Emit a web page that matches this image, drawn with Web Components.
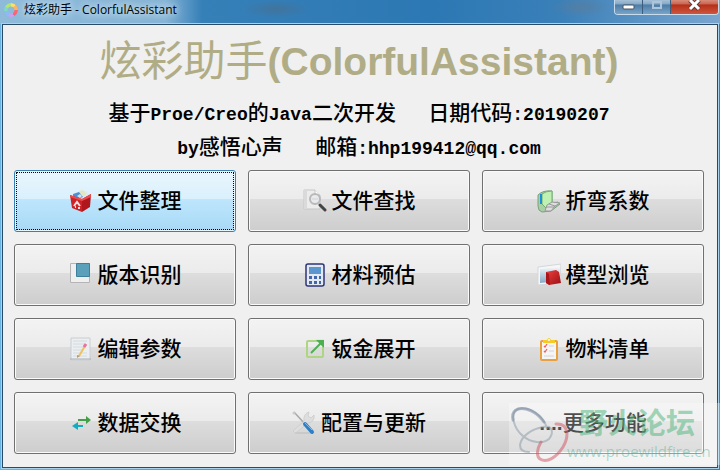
<!DOCTYPE html>
<html lang="zh-CN">
<head>
<meta charset="utf-8">
<title>炫彩助手 - ColorfulAssistant</title>
<style>
    body {
        margin: 0;
        background: #4a96cc;
        font-family: "Liberation Sans", "Noto Sans CJK SC", sans-serif;
    }
    svg {
        display: block;
    }
</style>
</head>
<body>
<app-window>
    <title-bar slot="bar">炫彩助手 - ColorfulAssistant</title-bar>
    <app-header>
        <span slot="name">炫彩助手</span>
        <span slot="latin">(ColorfulAssistant)</span>
    </app-header>
    <tool-grid>
        <tool-button active label="文件整理">
            <svg width="24" height="24" viewBox="0 0 24 24">
                <path d="M4 7L8 3L17 2L21 6L12 10Z" fill="#dfe9ee"/>
                <path d="M10 2L14 1L17 5L14 8Z" fill="#e3e6bf"/>
                <path d="M4 5L10 3L14 8L9 10L4 8Z" fill="#4d8fd0"/>
                <path d="M8 7l3-2 2 2-2 2z" fill="#cfe4f6"/>
                <path d="M1 6L13 10L13 23L3 19Z" fill="#cb2127"/>
                <path d="M22 5L13 10L13 23L21 18Z" fill="#b0171d"/>
                <path d="M1 6L13 10L22 5L22 8L13 12L1 8Z" fill="#ee4b4b"/>
                <path d="M5 17L8 13L11 17M6 18H7M9 19H11" stroke="#f9dede" stroke-width="2" fill="none"/>
            </svg>
        </tool-button>
        <tool-button label="文件查找">
            <svg width="24" height="24" viewBox="0 0 24 24">
                <path d="M1 1H12L17 6V20H1Z" fill="#ececec" stroke="#c6c6c6"/>
                <path d="M1 1V20H4V1Z" fill="#dadada"/>
                <path d="M12 1V6H17" fill="#fff" stroke="#c6c6c6"/>
                <path d="M17 16L22 21" stroke="#444" stroke-width="3" stroke-linecap="round"/>
                <circle cx="12" cy="10" r="5" fill="#e9eaec" stroke="#b8b8ba" stroke-width="2"/>
                <path d="M9 10H15" stroke="#cfd1d4"/>
            </svg>
        </tool-button>
        <tool-button label="折弯系数">
            <svg width="24" height="24" viewBox="0 0 24 24">
                <path d="M1 6Q6 1 15 2V14L21 13L23 15L14 22L5 23Q1 22 1 17Z" fill="#a9cfa7" stroke="#78a178"/>
                <path d="M5 5Q9 2 15 2V14Q10 15 9 19L5 15Z" fill="#bff0b4" stroke="#70b070"/>
                <path d="M4 5V15" stroke="#1a91d6" stroke-width="2"/>
                <path d="M10 16L15 13L23 14L18 17L14 22H8Z" fill="#dedede" stroke="#999"/>
                <path d="M9 18H17M12 15L18 17" stroke="#999" fill="none"/>
            </svg>
        </tool-button>
        <tool-button label="版本识别">
            <svg width="24" height="24" viewBox="0 0 24 24">
                <path d="M1.500 .5H20.500V19.500H1.500Z" fill="#efefef" stroke="#b5b5b5"/>
                <path d="M7.500 .5H20.500V13.500H7.500Z" fill="#5ba0ba" stroke="#3c8199"/>
            </svg>
        </tool-button>
        <tool-button label="材料预估">
            <svg width="24" height="24" viewBox="0 0 24 24">
                <rect x="3" y="1" width="18" height="22" rx="2" fill="#e4e9f1" stroke="#2c3478" stroke-width="1.5"/>
                <rect x="6" y="4" width="12" height="7" fill="#5b97cf"/>
                <path d="M6 13h3v3H6zM11 13h3v3h-3zM16 13h2v3h-2zM6 18h3v3H6zM11 18h3v3h-3zM16 18h2v3h-2z" fill="#3f68ab"/>
            </svg>
        </tool-button>
        <tool-button label="模型浏览">
            <svg width="24" height="24" viewBox="0 0 24 24">
                <defs>
                    <linearGradient id="pane" x2="0" y2="1"><stop stop-color="#f4f7fa"/><stop offset=".5" stop-color="#b9d0e2"/><stop offset="1" stop-color="#87a9c4"/></linearGradient>
                    <linearGradient id="ruby" x2="1" y2="1"><stop stop-color="#ef4141"/><stop offset="1" stop-color="#9b0f12"/></linearGradient>
                </defs>
                <path d="M1 4L24 1L23 20L1 22Z" fill="#f6f6f6" stroke="#d3d7da"/>
                <path d="M3 6L23 4L22 18L3 20Z" fill="url(#pane)"/>
                <path d="M9 9L19 7L22 9L24 20L12 22L9 20Z" fill="url(#ruby)"/>
                <path d="M9 9L12 11L13 22L9 20Z" fill="#a8161a"/>
            </svg>
        </tool-button>
        <tool-button label="编辑参数">
            <svg width="24" height="24" viewBox="0 0 24 24">
                <path d="M2 1H21V23H2Z" fill="#eceff1" stroke="#c9ced2"/>
                <path d="M1 22H22" stroke="#a9afb4"/>
                <path d="M4 4h14M4 7h13M4 10h11M4 13h9M4 16h14M4 19h14" stroke="#d3dade"/>
                <path d="M16 9L10 19" stroke="#edc260" stroke-width="2"/>
                <path d="M15 10L17 7" stroke="#e7759a" stroke-width="3"/>
                <path d="M8 21L8 18L11 19Z" fill="#b59a6b"/>
            </svg>
        </tool-button>
        <tool-button label="钣金展开">
            <svg width="24" height="24" viewBox="0 0 24 24">
                <rect x="4" y="4" width="16" height="16" rx="1" fill="none" stroke="#aed581" stroke-width="2"/>
                <path d="M13 2H21V11Z" fill="#e5e5e5"/>
                <path d="M8 16L18 6" stroke="#4caf50" stroke-width="2"/>
                <path d="M13 3H21V11Z" fill="#4caf50"/>
            </svg>
        </tool-button>
        <tool-button label="物料清单">
            <svg width="24" height="24" viewBox="0 0 24 24">
                <rect x="4" y="4" width="16" height="19" rx="1" fill="#f5f5f6" stroke="#e8a040" stroke-width="2"/>
                <path d="M6 6V3H10Q12-1 14 3H18V6Z" fill="#f7cb26"/>
                <circle cx="12" cy="3" r="1" fill="#fff"/>
                <path d="M7 9l1 1 2-3M7 14l1 1 2-3" stroke="#ef6060" fill="none" stroke-width="1.3"/>
                <path d="M12 9h5M12 14h5M7 19h10" stroke="#d2d4d8"/>
            </svg>
        </tool-button>
        <tool-button label="数据交换">
            <svg width="24" height="24" viewBox="0 0 24 24">
                <path d="M9 8H17V5L22 9L17 13V10H9Z" fill="#43a047"/>
                <path d="M14 14H9V11L3 15L9 19V16H14Z" fill="#12acc1"/>
            </svg>
        </tool-button>
        <tool-button label="配置与更新">
            <svg width="24" height="24" viewBox="0 0 24 24">
                <path d="M3 22H21" stroke="#bbb"/>
                <path d="M2 1L13 13" stroke="#a8a8a8" stroke-width="1.5"/>
                <circle cx="2" cy="2" r="1.5" fill="#c9c9c9"/>
                <path d="M3 22L1 20L12 10Q11 3 17 1L16 5L19 7L22 4Q23 11 16 12L5 21Z" fill="#dedede" stroke="#cacaca" stroke-width=".8"/>
                <path d="M13 13L20 21" stroke="#2f7fc4" stroke-width="4" stroke-linecap="round"/>
                <path d="M13 12L20 19" stroke="#7db7e8"/>
            </svg>
        </tool-button>
        <tool-button tight label="更多功能"><b>....</b></tool-button>
    </tool-grid>
    <water-mark slot="mark"></water-mark>
</app-window>

<script>
// attaches an open shadow root filled from a template string
function render(host, html) {
    const template = document.createElement('template');
    template.innerHTML = html;
    host.attachShadow({ mode: 'open' }).appendChild(template.content.cloneNode(true));
}

class AppWindow extends HTMLElement {
    constructor() {
        super();
        render(this, `
            <style>
                :host {
                    display: flex;
                    flex-direction: column;
                    position: relative;
                    box-sizing: border-box;
                    min-height: 100vh;
                    padding: 0 2px 2px;
                    overflow: hidden;
                    background: linear-gradient(90deg, #6cb4e0, #3f8dc4 50%, #5b96c8 90%, #2f7fc4);
                }
                main {
                    flex: 1;
                    display: flex;
                    flex-direction: column;
                    background: #f0f0f0;
                    border: 1px solid #274b68;
                    padding: 7px 13px 13px 11px;
                    outline: 1px solid #a9d3ec;
                }
            </style>
            <slot name="bar"></slot>
            <main><slot></slot></main>
            <slot name="mark"></slot>
        `);
    }
}

class TitleBar extends HTMLElement {
    constructor() {
        super();
        render(this, `
            <style>
                :host {
                    display: flex;
                    align-items: flex-start;
                    height: 24px;
                    margin: 0 -2px;
                    padding: 0 1px 0 4px;
                    font: 12px/20px "Open Sans", "Noto Sans CJK SC", sans-serif;
                    color: #000;
                    background:
                        radial-gradient(ellipse 34px 9px at 276px 9px, #4b6d8b99, transparent),
                        radial-gradient(ellipse 30px 10px at 580px 7px, #5b7c99aa, transparent),
                        linear-gradient(90deg, #8fbbda, #86b4d6 23%, #3680b8 28%, #2c78b4 60%, #3a80b9 78%, #7aa5cf);
                }
                .caption {
                    display: flex;
                    align-items: center;
                    gap: 6px;
                    flex: 1;
                    white-space: nowrap;
                    text-shadow: 0 0 6px #dcebf5, 0 0 10px #dcebf5;
                }
                .logo {
                    width: 14px;
                    height: 14px;
                    border-radius: 50%;
                    background: conic-gradient(#ffe066 0 12%, #ffb45e 12% 25%, #fb6472 25% 42%, #d29bf2 42% 58%, #8fb8f7 58% 72%, #7fdcc0 72% 84%, #b4e66e 84%);
                    -webkit-mask: radial-gradient(circle, transparent 3px, #000 4px);
                    mask: radial-gradient(circle, transparent 3px, #000 4px);
                }
                .controls {
                    display: flex;
                    height: 14px;
                    border: 1px solid #c8dceb;
                    border-top: 0;
                    border-radius: 0 0 4px 4px;
                    overflow: hidden;
                }
                button {
                    display: flex;
                    justify-content: center;
                    width: 28px;
                    padding: 0;
                    border: 0;
                    border-right: 1px solid #3c5e7e;
                    background: linear-gradient(#a5c1d9, #86a8c6 30%, #4c7ba5 34%, #78a4c8);
                }
                button.close {
                    width: 47px;
                    border-right: 0;
                    background: linear-gradient(#d98c7c, #c96450 30%, #b52f18 34%, #d0553c);
                }
            </style>
            <div class="caption">
                <i class="logo"></i>
                <span><slot></slot></span>
            </div>
            <div class="controls">
                <button aria-label="最小化"><svg width="13" height="14"><rect x="1" y="5" width="11" height="4" rx="1" fill="#fff" stroke="#4a5262"/></svg></button>
                <button aria-label="最大化"><svg width="13" height="14"><rect x="3" y="2" width="8" height="6" fill="none" stroke="#adc5db" stroke-width="2"/></svg></button>
                <button class="close" aria-label="关闭"><svg width="13" height="14"><path d="M2 0L11 9M11 0L2 9" stroke="#50404a" stroke-width="5"/><path d="M2 0L11 9M11 0L2 9" stroke="#fff" stroke-width="3"/></svg></button>
            </div>
        `);
    }
}

class AppHeader extends HTMLElement {
    constructor() {
        super();
        render(this, `
            <style>
                :host {
                    display: block;
                    text-align: center;
                    color: #000;
                    padding-bottom: 4px;
                }
                h1 {
                    display: flex;
                    justify-content: center;
                    margin: 0 0 6px;
                    line-height: 60px;
                    color: #b0ad86;
                    font-size: 39px;
                    white-space: nowrap;
                }
                .name {
                    font-size: 42px;
                    font-weight: 400;
                }
                p {
                    margin: 0;
                    font: 500 21px/34px "Liberation Mono", "Noto Sans CJK SC", monospace;
                    white-space: pre;
                }
                span {
                    font-size: 18px;
                    font-weight: bold;
                }
            </style>
            <h1><slot name="name" class="name"></slot><slot name="latin"></slot></h1>
            <p>基于<span>Proe/Creo</span>的<span>Java</span>二次开发<span>   </span>日期代码<span>:20190207</span></p>
            <p><span>by</span>感悟心声<span>   </span>邮箱<span>:hhp199412@qq.com</span></p>
        `);
    }
}

class ToolGrid extends HTMLElement {
    constructor() {
        super();
        render(this, `
            <style>
                :host {
                    flex: 1;
                    display: grid;
                    grid-template-columns: repeat(3, 1fr);
                    grid-auto-rows: minmax(62px, 1fr);
                    gap: 12px;
                }
            </style>
            <slot></slot>
        `);
    }
}

class ToolButton extends HTMLElement {
    constructor() {
        super();
        render(this, `
            <style>
                :host {
                    display: flex;
                }
                button {
                    flex: 1;
                    display: flex;
                    align-items: center;
                    justify-content: center;
                    gap: 5px;
                    padding: 0;
                    border: 1px solid #707070;
                    border-radius: 3px;
                    box-shadow: inset 0 0 0 1px #fafafa;
                    background: linear-gradient(#f3f3f3, #ebebeb 47%, #dddddd 47%, #cdcdcd);
                    color: #000;
                    font: 500 21px/30px "Liberation Sans", "Noto Sans CJK SC", sans-serif;
                    white-space: nowrap;
                }
                :host([active]) button {
                    border-color: #3c7fb1;
                    box-shadow: inset 0 0 0 1px #e8f7fe;
                    background: linear-gradient(#eaf6fd, #d9f0fc 47%, #bee6fd 47%, #a7d9f5);
                    outline: 1px dotted #000;
                    outline-offset: -3px;
                }
                :host([tight]) button {
                    gap: 0;
                }
            </style>
            <button><slot></slot><span class="label"></span></button>
        `);
    }

    connectedCallback() {
        this.shadowRoot.querySelector('.label').textContent = this.getAttribute('label');
    }
}

// translucent forum badge laid over the bottom right corner
class WaterMark extends HTMLElement {
    constructor() {
        super();
        render(this, `
            <style>
                :host {
                    position: absolute;
                    right: 0;
                    bottom: 5px;
                    display: flex;
                    width: 211px;
                    height: 62px;
                    background: #ffffff4d;
                    pointer-events: none;
                }
                svg {
                    flex: none;
                    margin-right: -2px;
                }
                .words {
                    flex: 1;
                    display: flex;
                    flex-direction: column;
                    white-space: nowrap;
                }
                strong {
                    padding-left: 12px;
                    font: bold 29px/36px "Noto Sans CJK SC", sans-serif;
                    color: #4cb47a80;
                }
                small {
                    font: 15px/24px "Open Sans", sans-serif;
                    color: #4fae9470;
                }
            </style>
            <svg width="60" height="62" viewBox="0 0 60 62" fill="none" stroke-linecap="round">
                <path d="M38 25C34 12 20 3 9 6C0 10 5 26 14 33C22 40 34 41 40 36C46 28 42 22 34 24C23 26 12 33 11 42C11 47 15 49 20 49" stroke="#8595a580" stroke-width="2"/>
                <path d="M4 17C2 8 8 4 17 6C25 8 31 13 35 19" stroke="#70849a80" stroke-width="3"/>
                <path d="M47 21C60 20 60 34 54 44C47 55 38 60 31 56C27 53 28 46 32 39" stroke="#d0506080" stroke-width="3"/>
            </svg>
            <div class="words"><strong>野火论坛</strong><small>www.proewildfire.cn</small></div>
        `);
    }
}

customElements.define('app-window', AppWindow);
customElements.define('title-bar', TitleBar);
customElements.define('app-header', AppHeader);
customElements.define('tool-grid', ToolGrid);
customElements.define('tool-button', ToolButton);
customElements.define('water-mark', WaterMark);
</script>
</body>
</html>
